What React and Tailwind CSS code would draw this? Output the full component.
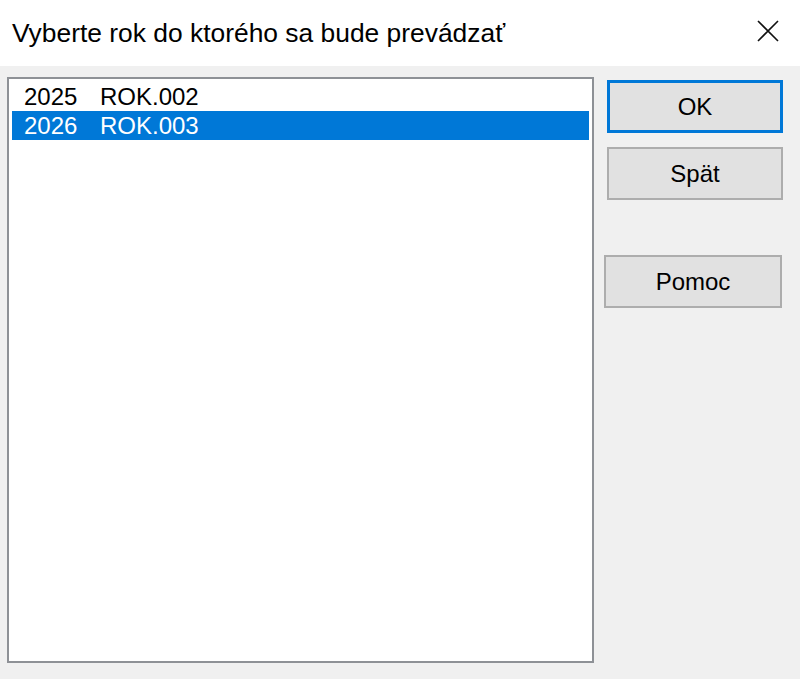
import { X } from 'lucide-react';

const rows = [
  { year: '2025', name: 'ROK.002', selected: false },
  { year: '2026', name: 'ROK.003', selected: true },
];

export default function App() {
  return (
    <div
      className="w-[800px] h-[679px] flex flex-col overflow-hidden bg-[#f0f0f0]"
      style={{ fontFamily: '"Liberation Sans", Arial, sans-serif' }}
    >
      <div className="h-[66px] bg-white flex items-center pl-[12px] pr-[20px]">
        <span className="text-[26.4px] text-black leading-none pt-[1px]">
          Vyberte rok do ktorého sa bude prevádzať
        </span>
        <svg className="ml-auto mb-[4px]" width="24" height="24" viewBox="0 0 24 24">
          <path d="M2 2 L22 22 M22 2 L2 22" stroke="#111" strokeWidth="1.6" fill="none" />
        </svg>
      </div>

      <div className="flex-1 flex pt-[11px] pl-[7px]">
        <div className="w-[587px] h-[586px] bg-white border-2 border-[#8e9196] p-[3px]">
          {rows.map((r) => (
            <div
              key={r.year}
              className={`h-[29px] flex items-center pl-[12px] text-[24px] leading-none ${
                r.selected ? 'bg-[#0078d7] text-white' : 'text-black'
              }`}
            >
              <span className="w-[76px]">{r.year}</span>
              <span>{r.name}</span>
            </div>
          ))}
        </div>

        <div className="flex flex-col ml-[13px] pt-[3px]">
          <button className="w-[176px] h-[53px] bg-[#e1e1e1] border-[3px] border-[#0078d7] text-[24px] text-black leading-none">
            OK
          </button>
          <button className="mt-[14px] w-[176px] h-[53px] bg-[#e1e1e1] border-2 border-[#adadad] text-[24px] text-black leading-none">
            Spät
          </button>
          <button className="mt-[55px] -ml-[3px] w-[178px] h-[53px] bg-[#e1e1e1] border-2 border-[#adadad] text-[24px] text-black leading-none">
            Pomoc
          </button>
        </div>
      </div>
    </div>
  );
}
